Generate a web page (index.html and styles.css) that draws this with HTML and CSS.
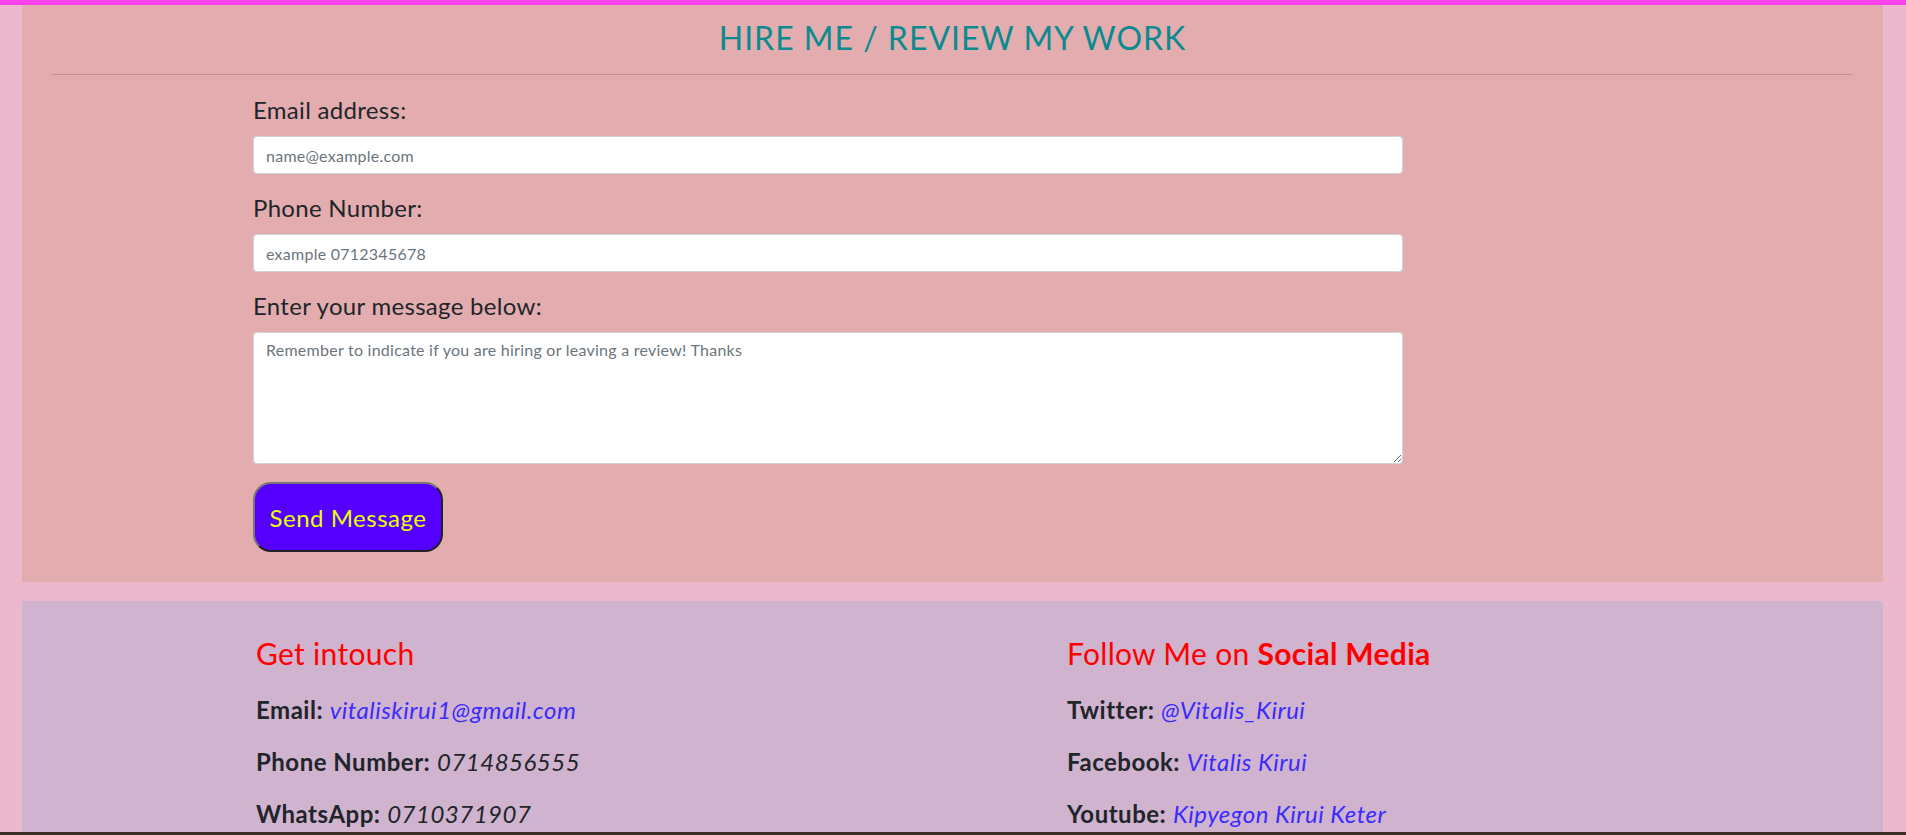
FILE: index.html
```html
<!DOCTYPE html>
<html lang="en">
<head>
<meta charset="utf-8">
<title>Hire me</title>
<link rel="stylesheet" href="styles.css">
</head>
<body>
<div class="topbar"></div>
<main class="page">
  <section class="hire">
    <h2 class="title">HIRE ME / REVIEW MY WORK</h2>
    <hr class="rule">
    <form class="form">
      <label class="label" for="email">Email address:</label>
      <input class="field" id="email" type="email" placeholder="name@example.com">
      <label class="label" for="phone">Phone Number:</label>
      <input class="field" id="phone" type="tel" placeholder="example 0712345678">
      <label class="label" for="msg">Enter your message below:</label>
      <textarea class="field area" id="msg" placeholder="Remember to indicate if you are hiring or leaving a review! Thanks"></textarea>
      <div class="actions"><button class="send" type="button">Send Message</button></div>
    </form>
  </section>
  <footer class="contact">
    <div class="col">
      <h3 class="head">Get intouch</h3>
      <p class="row"><b>Email:</b> <a class="link" href="#">vitaliskirui1@gmail.com</a></p>
      <p class="row"><b>Phone Number:</b> <i>0714856555</i></p>
      <p class="row"><b>WhatsApp:</b> <i>0710371907</i></p>
    </div>
    <div class="col col-right">
      <h3 class="head">Follow Me on <b>Social Media</b></h3>
      <p class="row"><b>Twitter:</b> <a class="link" href="#">@Vitalis_Kirui</a></p>
      <p class="row"><b>Facebook:</b> <a class="link" href="#">Vitalis Kirui</a></p>
      <p class="row"><b>Youtube:</b> <a class="link" href="#">Kipyegon Kirui Keter</a></p>
    </div>
  </footer>
  <div class="below"></div>
</main>
</body>
</html>
```

FILE: styles.css
```css
html, body {
  margin: 0;
  padding: 0;
}
body {
  background: #ecb8cc;
  font-family: Lato, "Noto Sans", sans-serif;
  color: #212529;
  overflow: hidden;
}
.topbar {
  height: 5px;
  background: #ff44ee;
}
.page {
  display: flex;
  flex-direction: column;
}
.hire {
  margin: 0 23px 0 22px;
  background: #e3adb0;
  padding: 12px 0 30px;
}
.title {
  margin: 0;
  text-align: center;
  font-weight: 400;
  font-size: 32px;
  line-height: 42px;
  color: #0b8a8f;
  letter-spacing: 1px;
}
.rule {
  margin: 15px 31px 0 30px;
  border: 0;
  border-top: 1px solid #c48c8e;
  height: 0;
}
.form {
  width: 1150px;
  margin: 17px 0 0 231px;
  display: flex;
  flex-direction: column;
}
.label {
  font-size: 24px;
  line-height: 32px;
  padding-top: 2px;
  margin-bottom: 10px;
  letter-spacing: 0.3px;
  color: #212529;
}
.field {
  box-sizing: border-box;
  height: 38px;
  border: 1px solid #ced4da;
  border-radius: 4px;
  background: #fff;
  padding: 6px 12px;
  font-family: Lato, "Noto Sans", sans-serif;
  font-size: 16px;
  letter-spacing: 0.25px;
  color: #212529;
  margin-bottom: 16px;
}
.field::placeholder {
  color: #6c757d;
}
.area {
  height: 132px;
  padding-top: 7px;
  margin-bottom: 18px;
  resize: vertical;
}
.actions {
  display: flex;
}
.send {
  box-sizing: border-box;
  width: 190px;
  height: 70px;
  background: #5500ff;
  color: #e8ff00;
  font-family: Lato, "Noto Sans", sans-serif;
  font-size: 24px;
  letter-spacing: 0.5px;
  border: 2px outset #767676;
  border-radius: 18px;
  padding: 0;
}
.contact {
  margin: 19px 23px 0 22px;
  background: #cfb3cf;
  padding: 34px 0 0 234px;
  height: 197px;
  display: flex;
}
.col {
  width: 811px;
}
.head {
  margin: 0 0 22px;
  font-size: 30px;
  line-height: 36px;
  font-weight: 400;
  letter-spacing: 0.3px;
  color: #ff0000;
}
.head b {
  font-weight: 700;
}
.row {
  margin: 0 0 20px;
  padding-top: 2px;
  font-size: 24px;
  line-height: 30px;
  letter-spacing: 0.5px;
  color: #212529;
}
.row b {
  font-weight: 700;
}
.row i, .link {
  font-style: italic;
}
.link {
  color: #3b2bff;
  text-decoration: none;
}
.below {
  height: 20px;
  background: #3c2e22;
}
```
